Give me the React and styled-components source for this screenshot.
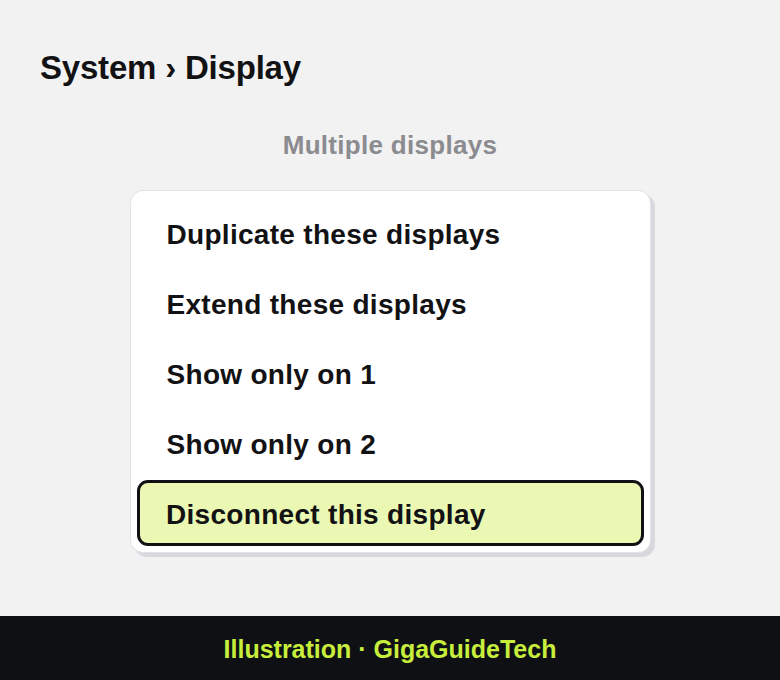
import React from "react";
import styled, { createGlobalStyle } from "styled-components";

const GlobalStyle = createGlobalStyle`
  html, body {
    margin: 0;
    padding: 0;
    background: #f2f2f2;
  }
  body {
    font-family: "Liberation Sans", Arial, sans-serif;
    color: #121214;
  }
`;

const Page = styled.div`
  width: 780px;
  height: 680px;
  display: flex;
  flex-direction: column;
  background: #f2f2f2;
`;

const Main = styled.main`
  flex: 1 1 auto;
  display: flex;
  flex-direction: column;
  padding: 49px 40px 0;
`;

const Breadcrumb = styled.h1`
  margin: 0;
  font-size: 33px;
  font-weight: 700;
  letter-spacing: -0.2px;
  line-height: 38px;
  color: #121214;
`;

const SectionTitle = styled.h2`
  margin: 43px 0 0;
  text-align: center;
  font-size: 26px;
  font-weight: 700;
  letter-spacing: 0.3px;
  line-height: 30px;
  color: #8b8b90;
`;

const Menu = styled.ul`
  list-style: none;
  margin: 30px auto 0;
  width: 521px;
  box-sizing: border-box;
  padding: 8.5px 6px 6px;
  display: flex;
  flex-direction: column;
  gap: 4px;
  background: #fff;
  border: 1.5px solid #e2e3e6;
  border-radius: 13px;
  box-shadow: 4px 4px 0 #d8d9de;
`;

const Option = styled.li`
  height: 66px;
  box-sizing: border-box;
  display: flex;
  align-items: center;
  padding-top: 4px;
  padding-left: ${({ $active }) => ($active ? "26.5px" : "30px")};
  font-size: 28px;
  font-weight: 700;
  letter-spacing: 0.3px;
  color: #121214;
  border-radius: 11px;
  background: ${({ $active }) => ($active ? "#eaf8b3" : "transparent")};
  border: ${({ $active }) => ($active ? "3.5px solid #111113" : "none")};
`;

const Footer = styled.footer`
  height: 64px;
  flex: 0 0 64px;
  display: flex;
  align-items: center;
  justify-content: center;
  padding-top: 2px;
  box-sizing: border-box;
  background: #0f1014;
  color: #c8ee3c;
  font-size: 25px;
  font-weight: 700;
`;

const options = [
  "Duplicate these displays",
  "Extend these displays",
  "Show only on 1",
  "Show only on 2",
  "Disconnect this display",
];

export default function App() {
  const selected = options.length - 1;
  return (
    <Page>
      <GlobalStyle />
      <Main>
        <Breadcrumb>System › Display</Breadcrumb>
        <SectionTitle>Multiple displays</SectionTitle>
        <Menu>
          {options.map((label, idx) => (
            <Option key={label} $active={idx === selected}>
              {label}
            </Option>
          ))}
        </Menu>
      </Main>
      <Footer>Illustration · GigaGuideTech</Footer>
    </Page>
  );
}
